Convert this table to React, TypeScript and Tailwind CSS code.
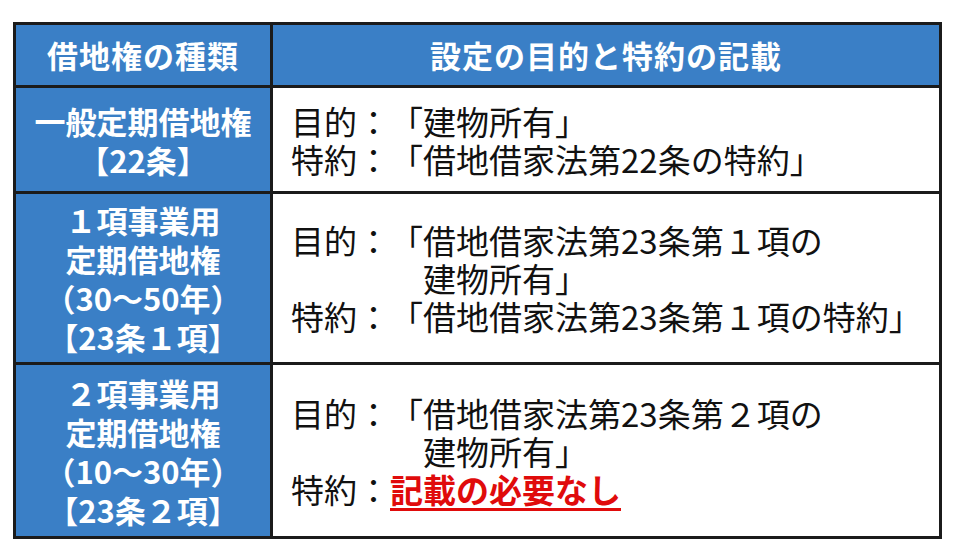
const font = { fontFamily: '"Noto Sans CJK JP", "Noto Sans", sans-serif' };

type Row = {
  kind: string[];
  lines: { text: React.ReactNode; indent?: boolean }[];
  height: string;
};

const rows: Row[] = [
  {
    kind: ['一般定期借地権', '【22条】'],
    lines: [{ text: '目的：「建物所有」' }, { text: '特約：「借地借家法第22条の特約」' }],
    height: 'h-[106px]',
  },
  {
    kind: ['１項事業用', '定期借地権', '（30～50年）', '【23条１項】'],
    lines: [
      { text: '目的：「借地借家法第23条第１項の' },
      { text: '建物所有」', indent: true },
      { text: '特約：「借地借家法第23条第１項の特約」' },
    ],
    height: 'h-[171px]',
  },
  {
    kind: ['２項事業用', '定期借地権', '（10～30年）', '【23条２項】'],
    lines: [
      { text: '目的：「借地借家法第23条第２項の' },
      { text: '建物所有」', indent: true },
      {
        text: (
          <>
            特約：
            <span className="font-bold text-[#e00b0b] underline decoration-[3px] underline-offset-[5px]">
              記載の必要なし
            </span>
          </>
        ),
      },
    ],
    height: 'h-[174px]',
  },
];

export default function App() {
  return (
    <div
      className="w-[960px] h-[556px] bg-white pt-[22px] pl-[13px] [text-spacing-trim:space-all]"
      style={font}
    >
      <table className="w-[929px] table-fixed border-collapse border-[3px] border-[#1b1b1b]">
        <colgroup>
          <col className="w-[257px]" />
          <col />
        </colgroup>
        <thead>
          <tr className="h-[63px] bg-[#3a7fc6] text-white">
            <th className="border-[3px] border-[#1b1b1b] text-[31px] font-bold leading-[40px] tracking-[1px]">
              借地権の種類
            </th>
            <th className="border-[3px] border-[#1b1b1b] text-[31px] font-bold leading-[40px] tracking-[1px]">
              設定の目的と特約の記載
            </th>
          </tr>
        </thead>
        <tbody>
          {rows.map((row, i) => (
            <tr key={i} className={row.height}>
              <td className="border-[3px] border-[#1b1b1b] bg-[#3a7fc6] text-center text-white text-[31px] font-bold leading-[39px]">
                {row.kind.map((k) => (
                  <div key={k}>{k}</div>
                ))}
              </td>
              <td className="border-[3px] border-[#1b1b1b] bg-white pl-[18px] text-[33px] leading-[38px] text-[#111]">
                {row.lines.map((l, j) => (
                  <div key={j} className={l.indent ? 'pl-[4em]' : ''}>
                    {l.text}
                  </div>
                ))}
              </td>
            </tr>
          ))}
        </tbody>
      </table>
    </div>
  );
}
